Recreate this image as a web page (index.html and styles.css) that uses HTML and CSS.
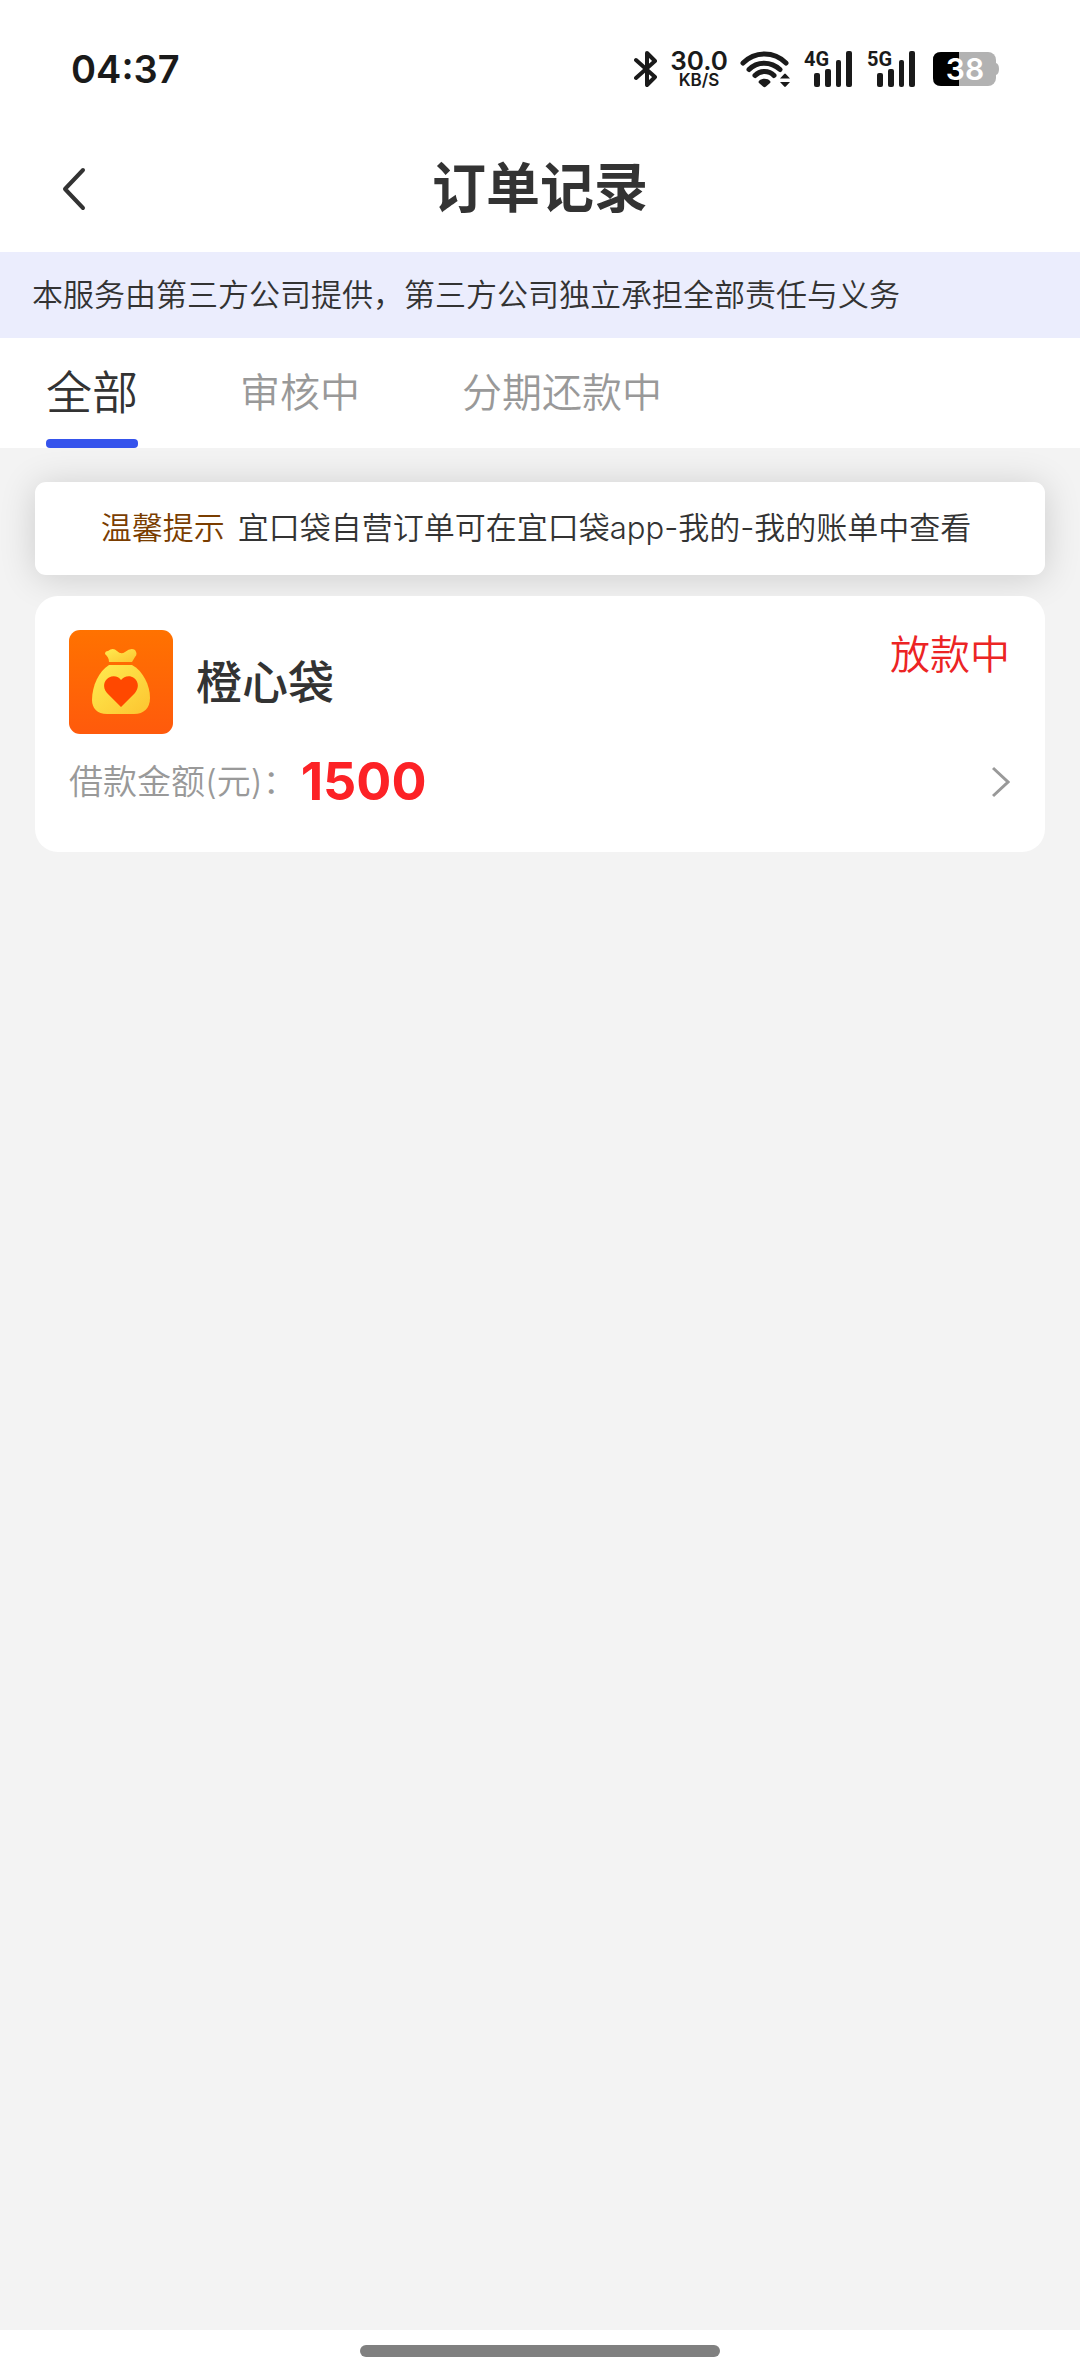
FILE: index.html
```html
<!DOCTYPE html>
<html lang="zh-CN">
<head>
<meta charset="utf-8">
<meta name="viewport" content="width=device-width, initial-scale=1">
<title>订单记录</title>
<link rel="stylesheet" href="styles.css">
</head>
<body>
<div class="status-bar">
  <time class="clock">04:37</time>
  <div class="indicators">
    <svg class="bluetooth" width="24" height="38" viewBox="0 0 24 38" aria-label="蓝牙"><path d="M2 10 21 27 13 35V3l8 8L2 28" fill="none" stroke="#1a1a1a" stroke-width="4" stroke-linecap="round" stroke-linejoin="round"/></svg>
    <div class="speed"><span class="speed-value">30.0</span><span class="speed-unit">KB/S</span></div>
    <svg class="wifi" width="50" height="38" viewBox="0 0 50 38" aria-label="无线网络">
      <g fill="none" stroke="#1a1a1a" stroke-width="5" stroke-linecap="round"><path d="M3 13C15 1 34 1 46 13"/><path d="M9 19.500C17 11 31 11 40 19.500"/><path d="M15 25.500C20 20 29 20 34 25.500"/></g>
      <path d="M19 31C21 28 28 28 30 31Q31 32 30 33L26 36.500Q24.500 38 23 36.500L19 33Q18 32 19 31Z" fill="#1a1a1a"/>
      <path d="M40 28.500 44.200 24Q45 23.200 45.800 24L50 28.500ZM40 32H50L45.800 36.500Q45 37.300 44.200 36.500Z" fill="#1a1a1a"/>
    </svg>
    <svg class="signal" width="49" height="38" viewBox="0 0 49 38">
      <g fill="#1a1a1a"><rect x="10" y="23" width="6" height="14" rx="2"/><rect x="21" y="19" width="6" height="18" rx="2"/><rect x="32" y="10" width="5" height="27" rx="2"/><rect x="42" y="1" width="6" height="36" rx="2"/></g>
      <text class="signal-label" x="0" y="16">4G</text>
    </svg>
    <svg class="signal" width="49" height="38" viewBox="0 0 49 38">
      <g fill="#1a1a1a"><rect x="10" y="23" width="6" height="14" rx="2"/><rect x="21" y="19" width="6" height="18" rx="2"/><rect x="32" y="10" width="5" height="27" rx="2"/><rect x="42" y="1" width="6" height="36" rx="2"/></g>
      <text class="signal-label" x="0" y="16">5G</text>
    </svg>
    <svg class="battery" width="66" height="34" viewBox="0 0 66 34">
      <rect width="63" height="34" rx="8" fill="#b2b2b2"/><path d="M63 11Q66 12 66 17T63 23Z" fill="#b2b2b2"/>
      <path d="M8 0H26V34H8Q0 34 0 26V8Q0 0 8 0Z" fill="#000"/>
      <text class="battery-label" x="32" y="28" text-anchor="middle">38</text>
    </svg>
  </div>
</div>
<header class="nav">
  <button class="back" type="button" aria-label="返回"><svg width="24" height="44" viewBox="0 0 24 44"><path d="M21 3 3 22 21 41" fill="none" stroke="#333" stroke-width="4" stroke-linecap="round" stroke-linejoin="round"/></svg></button>
  <h1 class="title">订单记录</h1>
</header>
<p class="disclaimer">本服务由第三方公司提供，第三方公司独立承担全部责任与义务</p>
<nav class="tabs">
  <button class="tab tab-active" type="button">全部</button>
  <button class="tab" type="button">审核中</button>
  <button class="tab" type="button">分期还款中</button>
</nav>
<main class="content">
  <p class="tip"><span class="tip-label">温馨提示</span><span>宜口袋自营订单可在宜口袋app-我的-我的账单中查看</span></p>
  <a class="order" href="#order">
    <div class="order-head">
      <svg class="logo" width="104" height="104" viewBox="0 0 104 104" aria-hidden="true">
        <defs>
          <linearGradient id="orange" x1="0" y1="0" x2="0" y2="1"><stop offset="0" stop-color="#ff7200"/><stop offset="1" stop-color="#ff5a0c"/></linearGradient>
          <linearGradient id="gold" x1="0" y1="0" x2="1" y2="1"><stop offset="0" stop-color="#ffec50"/><stop offset="1" stop-color="#fcc430"/></linearGradient>
        </defs>
        <rect width="104" height="104" rx="11" fill="url(#orange)"/>
        <path d="M40 32C40 28 38 26 36 24Q36 21 39 21Q44 17 48 21Q52 25 56 22Q62 17 66 20Q69 24 66 27L63 32Z" fill="url(#gold)"/>
        <path d="M40 35H63C74 41 81 55 81 68C81 78 75 84 65 84H38C28 84 23 78 23 70C23 56 30 41 40 35Z" fill="url(#gold)"/>
        <path d="M52 77 38 63C33 57 35 50 40 47.500C45 45 50 47 52 50C55 46 61 45 65 48C70 52 70 58 66 63Z" fill="#ff4800"/>
      </svg>
      <h2 class="name">橙心袋</h2>
      <span class="state">放款中</span>
    </div>
    <div class="order-row">
      <span class="amount-label">借款金额(元)：</span>
      <strong class="amount">1500</strong>
      <svg class="chevron" width="18" height="32" viewBox="0 0 18 32" aria-hidden="true"><path d="M1 2 16 16 1 30" fill="none" stroke="#999" stroke-width="3"/></svg>
    </div>
  </a>
</main>
<footer class="gesture-area"><div class="gesture-bar"></div></footer>
</body>
</html>
```
FILE: styles.css
```css
* { box-sizing: border-box; }

body {
  margin: 0;
  min-height: 100vh;
  display: flex;
  flex-direction: column;
  background: #fff;
  color: #333;
  font-family: Inter, "Noto Sans CJK SC", sans-serif;
  font-weight: 350;
}

h1, h2, p { margin: 0; }

button {
  padding: 0;
  border: 0;
  background: none;
  color: inherit;
  font: inherit;
}

svg { display: block; flex: none; }

.status-bar {
  display: flex;
  align-items: center;
  justify-content: space-between;
  height: 122px;
  padding: 16px 81px 0 71px;
  color: #1a1a1a;
}

.clock { font-size: 38px; font-weight: 600; }

.indicators { display: flex; align-items: center; }

.speed {
  display: flex;
  flex-direction: column;
  align-items: center;
  width: 60px;
  margin: 0 11px;
  font-weight: 600;
}

.speed-value { font-size: 26px; line-height: 22px; }
.speed-unit { font-size: 17px; line-height: 16px; }
.wifi { margin-right: 14px; }
.signal { margin-right: 14px; }
.battery { margin-left: 3px; }

.signal-label {
  fill: #1a1a1a;
  font-family: Roboto, sans-serif;
  font-size: 20px;
  font-weight: 700;
}

.battery-label { fill: #fff; font-size: 30px; font-weight: 600; }

.nav {
  display: grid;
  grid-template-columns: 1fr auto 1fr;
  align-items: center;
  height: 130px;
  padding: 4px 62px 0;
}

.back { justify-self: start; }

.title { font-size: 54px; line-height: 64px; font-weight: 700; }

.disclaimer {
  padding: 20px 32px;
  background: #ebedfd;
  font-size: 31px;
  line-height: 46px;
}

.tabs {
  display: flex;
  gap: 102px;
  height: 110px;
  padding: 0 46px;
}

.tab {
  padding-top: 8px;
  color: #999;
  font-size: 40px;
  line-height: 93px;
  border-bottom: 9px solid transparent;
}

.tab-active {
  display: flex;
  flex-direction: column;
  border: 0;
  color: #333;
  font-size: 46px;
}

.tab-active::after {
  content: "";
  width: 100%;
  height: 9px;
  border-radius: 4px;
  background: #3553ec;
}

.content {
  flex: 1;
  display: flex;
  flex-direction: column;
  gap: 21px;
  padding: 34px 35px;
  background: #f3f3f3;
}

.tip {
  display: flex;
  justify-content: center;
  gap: 13px;
  padding: 23px 8px 24px 0;
  border-radius: 11px;
  background: #fff;
  box-shadow: 0 3px 36px rgba(0, 0, 0, 0.16);
  font-size: 31px;
  line-height: 46px;
}

.tip-label { color: #7a3d00; }

.order {
  position: relative;
  padding: 34px 35px 38px 34px;
  border-radius: 23px;
  background: #fff;
  color: inherit;
  text-decoration: none;
}

.order-head { display: flex; align-items: center; gap: 23px; }

.name { font-size: 46px; line-height: 64px; font-weight: 500; }

.state {
  align-self: flex-start;
  margin-left: auto;
  color: #ec2424;
  font-size: 40px;
  line-height: 50px;
}

.order-row { display: flex; align-items: center; gap: 4px; padding-top: 16px; }

.amount-label { color: #999; font-size: 34px; line-height: 64px; }

.amount { color: #fc2226; font-size: 52px; line-height: 64px; font-weight: 700; }

.chevron { margin-left: auto; }

.gesture-area {
  display: flex;
  justify-content: center;
  height: 48px;
  padding-top: 15px;
}

.gesture-bar {
  width: 360px;
  height: 12px;
  border-radius: 6px;
  background: #808080;
}
```
